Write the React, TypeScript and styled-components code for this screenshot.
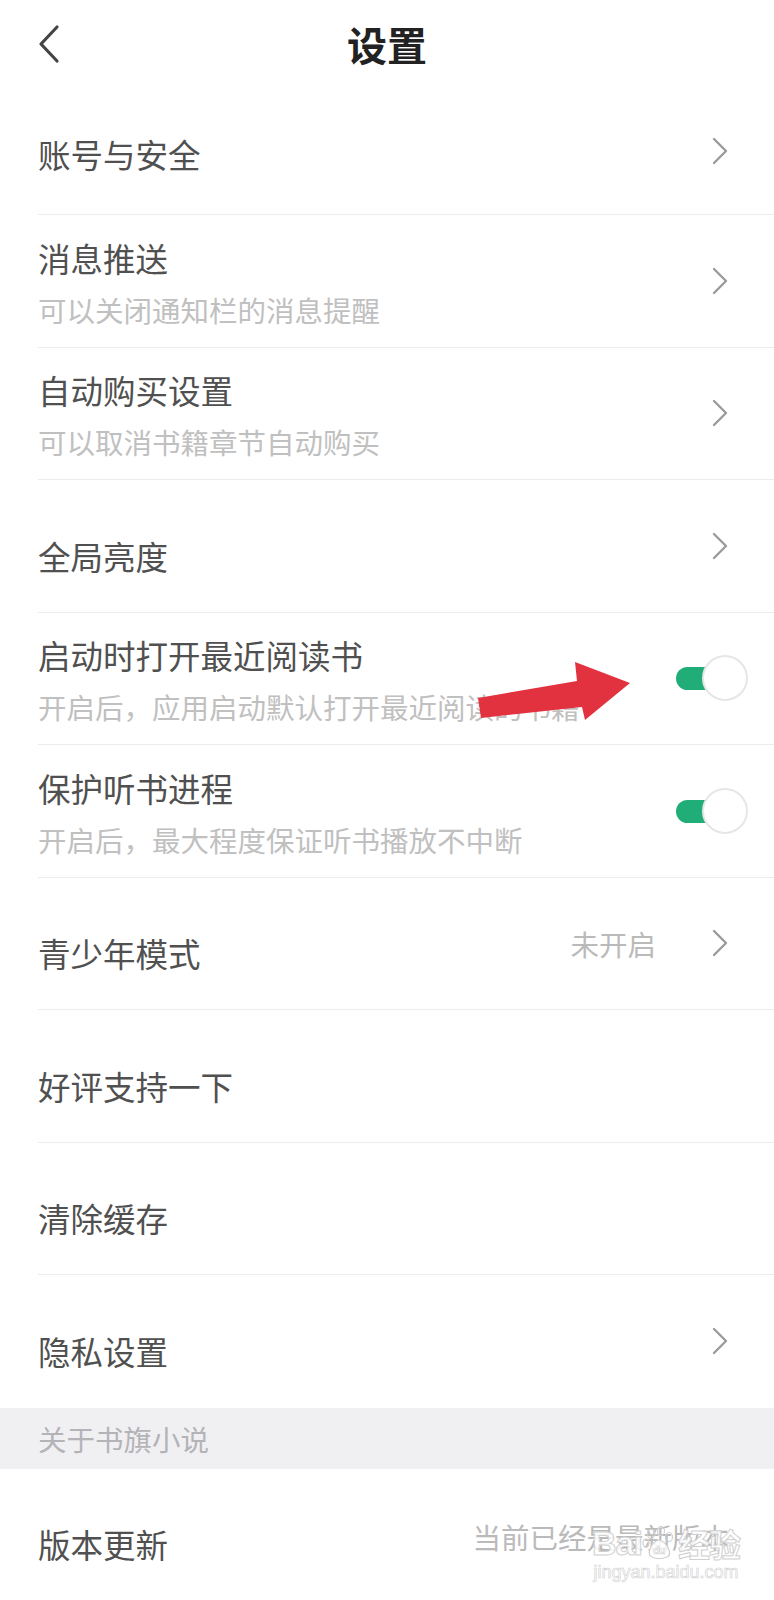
import React from 'react'
import styled, { createGlobalStyle } from 'styled-components'

const GlobalStyle = createGlobalStyle`
  html, body {
    margin: 0;
    padding: 0;
    background: #ffffff;
  }
  body {
    font-family: "Noto Sans CJK SC", "Noto Sans", sans-serif;
  }
`

const Page = styled.div`
  position: relative;
  width: 774px;
  min-height: 1600px;
  background: #ffffff;
  overflow: hidden;
`

const Header = styled.header`
  display: grid;
  grid-template-columns: 1fr auto 1fr;
  align-items: center;
  height: 88px;
  padding-left: 37px;
  box-sizing: border-box;
`

const BackButton = styled.button`
  display: flex;
  align-items: center;
  justify-self: start;
  padding: 0;
  border: 0;
  background: none;
`

const Title = styled.h1`
  margin: 0;
  font-size: 40px;
  font-weight: 700;
  color: #222222;
  line-height: 1;
  padding-right: 37px;
`

const List = styled.div`
  display: flex;
  flex-direction: column;
`

const Row = styled.div<{ $h?: number; $last?: boolean }>`
  display: flex;
  align-items: center;
  height: ${({ $h }) => $h ?? 132.5}px;
  margin-left: 38px;
  padding-right: 26px;
  box-sizing: border-box;
  border-bottom: ${({ $last }) => ($last ? '0' : '1px solid #ececec')};
`

const TextBlock = styled.div<{ $shift: number }>`
  flex: 1;
  display: flex;
  flex-direction: column;
  gap: 8px;
  padding-top: ${({ $shift }) => $shift}px;
`

const Label = styled.div`
  font-size: 32.5px;
  line-height: 44px;
  color: #505050;
  white-space: nowrap;
`

const Sub = styled.div`
  font-size: 28.5px;
  line-height: 44px;
  color: #c0c0c0;
  white-space: nowrap;
`

const Value = styled.span<{ $gap: number }>`
  font-size: 28.5px;
  color: #bababa;
  margin-right: ${({ $gap }) => $gap}px;
  white-space: nowrap;
`

const Chevron = styled.svg`
  width: 16px;
  height: 28px;
  margin-right: 20px;
  flex-shrink: 0;
`

const Toggle = styled.div`
  position: relative;
  width: 72px;
  height: 46px;
  flex-shrink: 0;
`

const Track = styled.div`
  position: absolute;
  left: 0;
  top: 12px;
  width: 56px;
  height: 23px;
  border-radius: 12px;
  background: #20ad77;
`

const Knob = styled.div`
  position: absolute;
  right: 0;
  top: 0;
  width: 46px;
  height: 46px;
  border-radius: 50%;
  background: #ffffff;
  border: 2px solid #e6e6e8;
  box-sizing: border-box;
`

const Section = styled.div`
  display: flex;
  align-items: center;
  height: 61px;
  padding-left: 38px;
  background: #f0f0f2;
  font-size: 28.5px;
  color: #b3b3b8;
`

const Arrow = styled.svg`
  position: absolute;
  left: 0;
  top: 0;
  width: 774px;
  height: 1600px;
  pointer-events: none;
`

const Watermark = styled.div`
  position: absolute;
  left: 592px;
  top: 1526px;
  display: flex;
  flex-direction: column;
  align-items: center;
  font-family: "Liberation Sans", Arial, sans-serif;
  color: rgba(255, 255, 255, 0.85);
  -webkit-text-stroke: 1px #d0d0d0;
  pointer-events: none;
`

const MarkLogo = styled.div`
  display: flex;
  align-items: center;
  font-size: 34px;
  font-weight: 700;
  line-height: 1;
  letter-spacing: -1px;
`

const MarkCjk = styled.span`
  font-family: "Noto Sans CJK SC", sans-serif;
  font-size: 32px;
  font-weight: 700;
  margin-left: 2px;
`

const MarkUrl = styled.div`
  font-size: 18px;
  margin-top: 2px;
  -webkit-text-stroke: 0.6px #d0d0d0;
`

const ChevronRight = () => (
  <Chevron viewBox="0 0 16 28">
    <polyline points="2,2 14,14 2,26" fill="none" stroke="#9b9b9b" strokeWidth="2.4" strokeLinecap="round" strokeLinejoin="round" />
  </Chevron>
)

const Switch = () => (
  <Toggle>
    <Track />
    <Knob />
  </Toggle>
)

type Item = {
  label: string
  sub?: string
  value?: string
  kind: 'arrow' | 'switch' | 'none' | 'text'
  h?: number
  shift?: number
  last?: boolean
}

const items: Item[] = [
  { label: '账号与安全', kind: 'arrow', h: 127, shift: 6 },
  { label: '消息推送', sub: '可以关闭通知栏的消息提醒', kind: 'arrow' },
  { label: '自动购买设置', sub: '可以取消书籍章节自动购买', kind: 'arrow' },
  { label: '全局亮度', kind: 'arrow' },
  { label: '启动时打开最近阅读书', sub: '开启后，应用启动默认打开最近阅读的书籍', kind: 'switch' },
  { label: '保护听书进程', sub: '开启后，最大程度保证听书播放不中断', kind: 'switch' },
  { label: '青少年模式', value: '未开启', kind: 'arrow' },
  { label: '好评支持一下', kind: 'none' },
  { label: '清除缓存', kind: 'none' },
  { label: '隐私设置', kind: 'arrow', last: true },
]

const SettingRow = ({ item }: { item: Item }) => {
  const shift = item.shift ?? (item.sub ? 6 : 20)
  return (
    <Row $h={item.h} $last={item.last}>
      <TextBlock $shift={shift}>
        <Label>{item.label}</Label>
        {item.sub && <Sub>{item.sub}</Sub>}
      </TextBlock>
      {item.value && <Value $gap={item.kind === 'arrow' ? 56 : 19}>{item.value}</Value>}
      {item.kind === 'arrow' && <ChevronRight />}
      {item.kind === 'switch' && <Switch />}
    </Row>
  )
}

export default function App() {
  return (
    <>
      <GlobalStyle />
      <Page>
        <Header>
          <BackButton aria-label="返回">
            <svg width="24" height="40" viewBox="0 0 24 40">
              <polyline points="20,3 4,20 20,37" fill="none" stroke="#444" strokeWidth="3.2" strokeLinecap="round" strokeLinejoin="round" />
            </svg>
          </BackButton>
          <Title>设置</Title>
          <span />
        </Header>

        <List>
          {items.map((item) => (
            <SettingRow key={item.label} item={item} />
          ))}
          <Section>关于书旗小说</Section>
          <SettingRow item={{ label: '版本更新', value: '当前已经是最新版本', kind: 'text', h: 136, shift: 14, last: true }} />
        </List>

        <Arrow viewBox="0 0 774 1600">
          <polygon
            points="478,698 577,681 575,662 630,683 585,720 582,707 481,718"
            fill="#e2323f"
          />
        </Arrow>

        <Watermark>
          <MarkLogo>
            Bai
            <svg width="34" height="34" viewBox="0 0 34 34">
              <g fill="none" stroke="#d0d0d0" strokeWidth="1.2">
                <ellipse cx="9" cy="8" rx="3.5" ry="4.5" />
                <ellipse cx="19" cy="5" rx="3.5" ry="4.5" />
                <ellipse cx="27" cy="11" rx="3.5" ry="4.5" />
                <ellipse cx="4" cy="17" rx="3" ry="4" />
                <path d="M17 14 C 9 16, 4 28, 10 31 C 14 33, 20 33, 25 31 C 31 28, 25 16, 17 14 Z" fill="rgba(255,255,255,0.85)" />
              </g>
              <text x="11" y="28" fontSize="11" fill="rgba(255,255,255,0.9)" stroke="#d0d0d0" strokeWidth="0.6" fontFamily="Liberation Sans, sans-serif" fontWeight="700">du</text>
            </svg>
            <MarkCjk>经验</MarkCjk>
          </MarkLogo>
          <MarkUrl>jingyan.baidu.com</MarkUrl>
        </Watermark>
      </Page>
    </>
  )
}
